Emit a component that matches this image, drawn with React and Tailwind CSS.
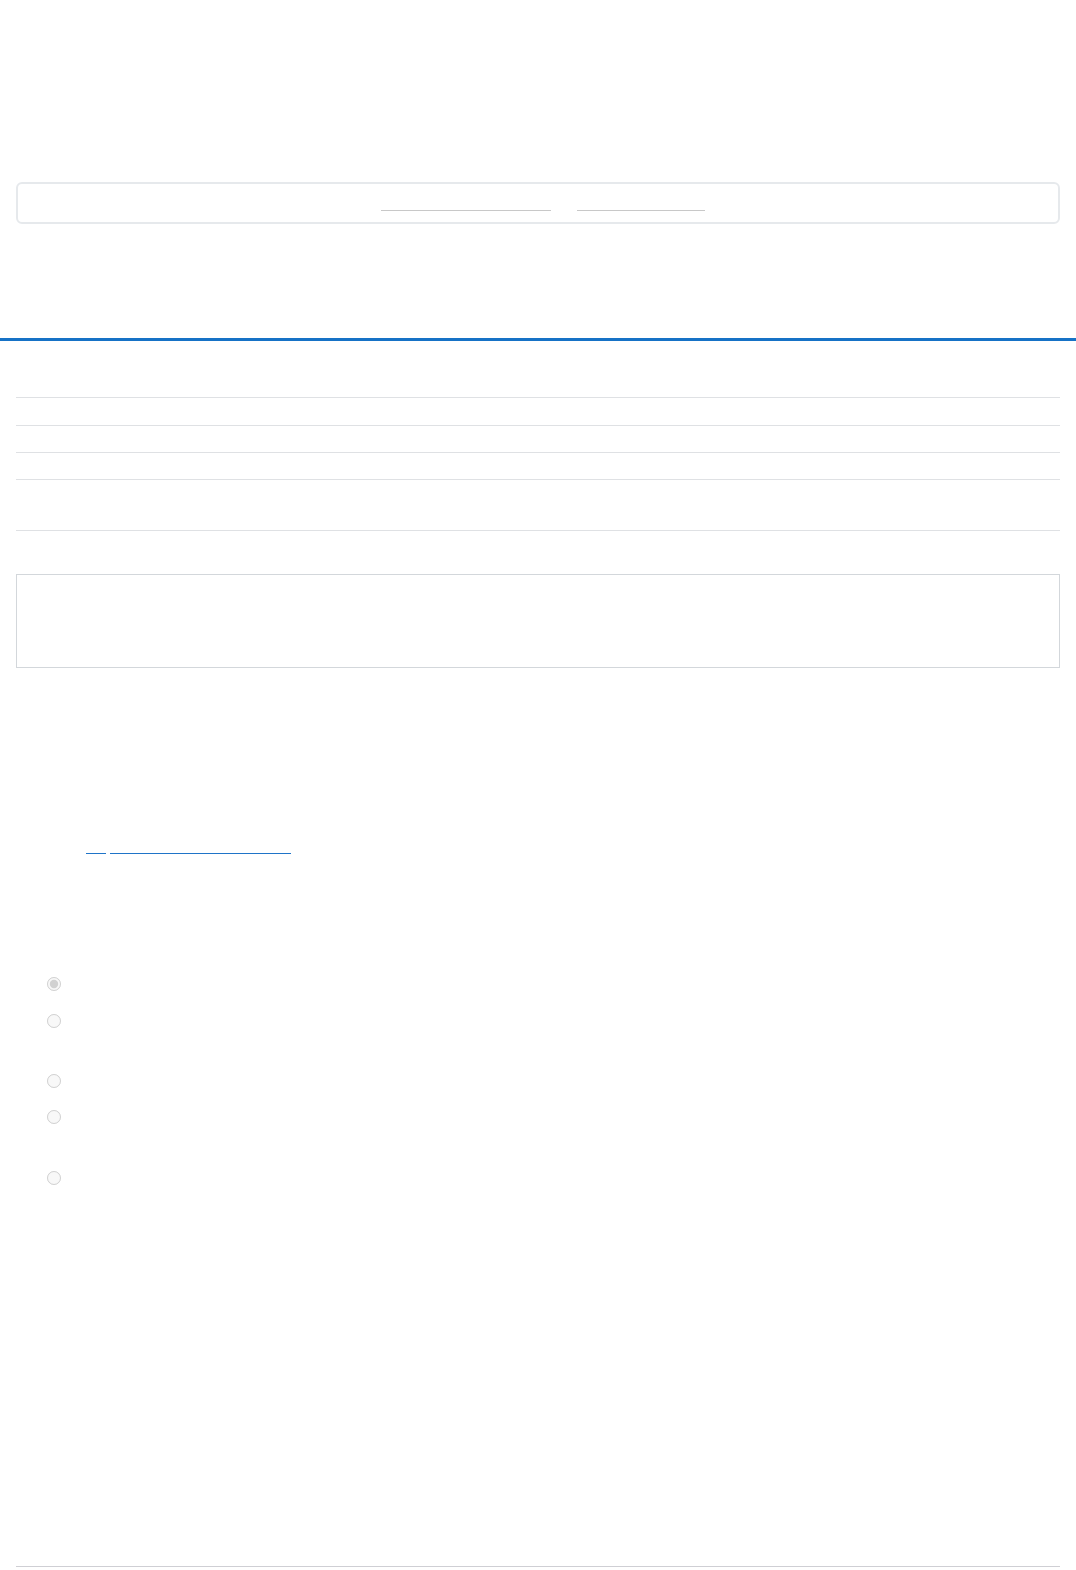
import React from 'react';

const Rule = ({ className = '' }) => <div className={`mx-4 h-px bg-[#dfe1e4] ${className}`} />;

const Radio = ({ checked = false, className = '' }) => (
    <div className={`flex items-center pl-[47px] ${className}`}>
        <input type="radio" name="choice" disabled defaultChecked={checked} className="m-0 h-[14px] w-[14px]" />
    </div>
);

const App = () => {
    return (
        <div className="relative w-[1076px] h-[1570px] bg-white overflow-hidden" style={{ fontFamily: '"Liberation Sans", Arial, sans-serif' }}>
            {/* top notice box */}
            <div className="pt-[182px]">
                <div className="mx-4 h-[42px] rounded-md border-2 border-[#e6e9ec] flex pl-[363px] pt-[26px] gap-[26px]">
                    <span className="block h-px w-[170px] bg-[#c8c8c8]" />
                    <span className="block h-px w-[128px] bg-[#c8c8c8]" />
                </div>
            </div>

            {/* blue header rule */}
            <div className="mt-[114px] h-[3px] bg-[#1672c6]" />

            {/* table rows */}
            <Rule className="mt-[56px]" />
            <Rule className="mt-[27px]" />
            <Rule className="mt-[26px]" />
            <Rule className="mt-[26px]" />
            <Rule className="mt-[50px]" />

            {/* panel */}
            <div className="mx-4 mt-[43px] h-[94px] border border-[#d3d7db]" />

            {/* links */}
            <div className="mt-[185px] flex pl-[86px] gap-[4px]">
                <span className="block h-px w-[20px] bg-[#1f74c8]" />
                <span className="block h-px w-[181px] bg-[#1f74c8]" />
            </div>

            {/* options */}
            <div className="mt-[123px] flex flex-col">
                <Radio checked />
                <Radio className="mt-[23px]" />
                <Radio className="mt-[46px]" />
                <Radio className="mt-[22px]" />
                <Radio className="mt-[47px]" />
            </div>

            <div className="absolute left-4 right-4 top-[1566px] h-px bg-[#cfcfd4]" />
        </div>
    );
};

export default App;
